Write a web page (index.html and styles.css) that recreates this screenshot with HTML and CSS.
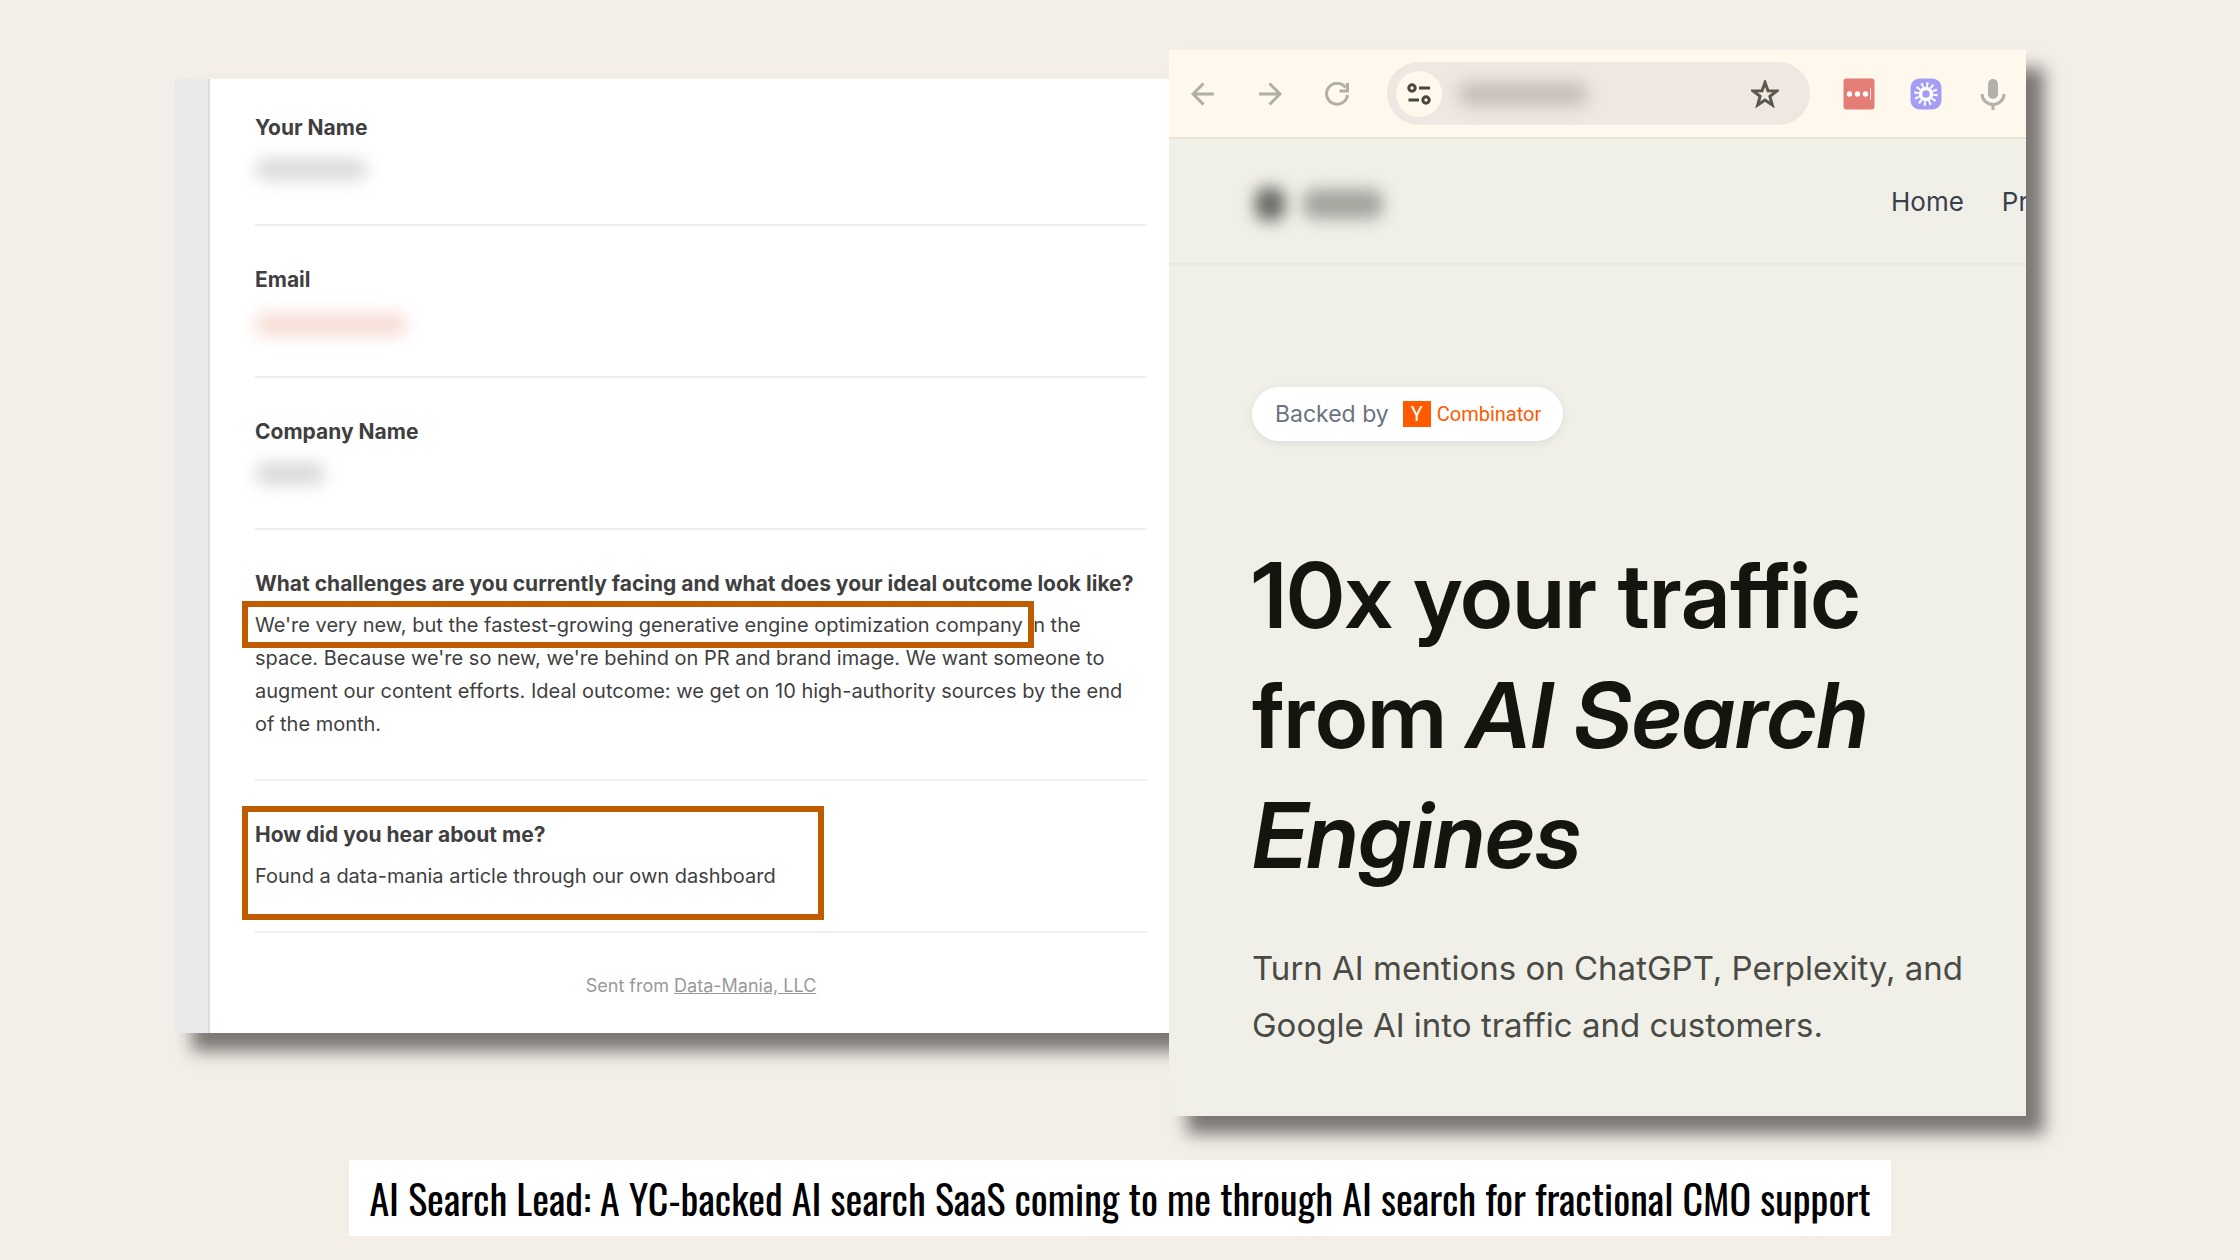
FILE: index.html
```html
<!DOCTYPE html>
<html lang="en">
<head>
<meta charset="utf-8">
<meta name="viewport" content="width=device-width, initial-scale=1">
<title>AI Search Lead</title>
<link rel="stylesheet" href="styles.css">
</head>
<body>
<main class="slide">
  <div class="panels">
    <section class="email">
      <dl class="fields">
        <div class="field">
          <dt>Your Name</dt>
          <dd><span class="redacted redacted-name"></span></dd>
        </div>
        <div class="field">
          <dt>Email</dt>
          <dd><span class="redacted redacted-email"></span></dd>
        </div>
        <div class="field">
          <dt>Company Name</dt>
          <dd><span class="redacted redacted-company"></span></dd>
        </div>
        <div class="field">
          <dt>What challenges are you currently facing and what does your ideal outcome look like?</dt>
          <dd><span class="marked marked-line">We're very new, but the fastest-growing generative engine optimization company</span> in the space. Because we're so new, we're behind on PR and brand image. We want someone to augment our content efforts. Ideal outcome: we get on 10 high-authority sources by the end of the month.</dd>
        </div>
        <div class="field">
          <div class="marked marked-block">
            <dt>How did you hear about me?</dt>
            <dd>Found a data-mania article through our own dashboard</dd>
          </div>
        </div>
      </dl>
      <p class="sent">Sent from <a href="#">Data-Mania, LLC</a></p>
    </section>

    <section class="browser">
      <div class="toolbar">
        <div class="history">
          <button type="button" aria-label="Back"><svg viewBox="0 0 24 24" width="24" height="24"><path d="M23 12H2M12.500 1.500 2 12l10.500 10.500"/></svg></button>
          <button type="button" aria-label="Forward"><svg viewBox="0 0 24 24" width="24" height="24"><path d="M1 12h21M11.500 1.500 22 12 11.500 22.500"/></svg></button>
          <button type="button" aria-label="Reload"><svg viewBox="0 0 24 24" width="24" height="24"><path d="M20.500 5.500A10.500 10.500 0 1 0 22.500 13M22.500 1v8h-8"/></svg></button>
        </div>
        <div class="address">
          <button type="button" class="site-info" aria-label="Site information"><svg viewBox="0 0 24 24" width="24" height="24"><circle cx="5" cy="6" r="3.200"/><path d="M12 6h11M1.500 18H12"/><circle cx="19" cy="18" r="3.200"/></svg></button>
          <span class="redacted redacted-url"></span>
          <button type="button" class="bookmark" aria-label="Bookmark"><svg viewBox="0 0 28 28" width="28" height="28"><path d="M14 2.500l3 8.200 8.800.300-6.900 5.400 2.400 8.600-7.300-4.900L6.700 25l2.400-8.600L2.200 11l8.800-.300z"/></svg></button>
        </div>
        <div class="extensions">
          <button type="button" aria-label="Password manager"><svg viewBox="0 0 32 32" width="32" height="32"><rect x=".5" y=".5" width="31" height="31" rx="3" fill="#e47d76"/><g fill="#fff"><circle cx="6.500" cy="16" r="2.700"/><circle cx="14.500" cy="16" r="2.700"/><circle cx="22.500" cy="16" r="2.700"/><rect x="27" y="10" width="1" height="12" opacity=".8"/></g></svg></button>
          <button type="button" aria-label="Extension"><svg viewBox="0 0 32 32" width="32" height="32"><rect x=".5" y=".5" width="31" height="31" rx="9" fill="#a39df5"/><g stroke="#fff" fill="none"><circle cx="16" cy="16" r="5.500" stroke-width="3.500"/><circle cx="16" cy="16" r="9.500" stroke-width="4.500" stroke-dasharray="2 2.974"/></g></svg></button>
          <button type="button" aria-label="Voice"><svg viewBox="0 0 32 32" width="32" height="32"><rect x="11" y="1" width="10" height="20" rx="5" fill="#b3b0ab"/><path d="M5 16a11 10.500 0 0 0 22 0M16 26.500V32" fill="none" stroke="#b3b0ab" stroke-width="3"/></svg></button>
        </div>
      </div>
      <header class="site-header">
        <div class="brand"><span class="redacted redacted-mark"></span><span class="redacted redacted-brand"></span></div>
        <nav class="site-nav"><a href="#">Home</a><a href="#">Pr</a></nav>
      </header>
      <div class="hero">
        <p class="badge">Backed by <span class="yc"><span class="yc-mark">Y</span>Combinator</span></p>
        <h1>10x your traffic from <em>AI Search Engines</em></h1>
        <p class="lead">Turn AI mentions on ChatGPT, Perplexity, and Google AI into traffic and customers.</p>
      </div>
    </section>
  </div>
  <p class="caption">AI Search Lead: A YC-backed AI search SaaS coming to me through AI search for fractional CMO support</p>
</main>
</body>
</html>
```
FILE: styles.css
```css
* { box-sizing: border-box; }

body {
  margin: 0;
  background: #f4eee8;
  font-family: Inter, "Liberation Sans", sans-serif;
}

h1, p, dl, dd { margin: 0; }
a { color: inherit; }

button {
  display: grid;
  place-items: center;
  padding: 0;
  border: 0;
  background: none;
}

.slide {
  display: flex;
  flex-direction: column;
  align-items: center;
  gap: 44px;
  min-height: 100vh;
}

.panels {
  display: grid;
  grid-template-columns: 995fr 857fr;
  align-items: start;
  align-self: stretch;
  padding: 50px 214px 0 174px;
}

/* Form submission email */
.email {
  margin-top: 29px;
  padding: 0 22px 31px 47px;
  border-left: 34px solid #e8eaec;
  background: #fff;
  box-shadow: inset 2px 0 #dcdddf, 18px 18px 16px rgba(0, 0, 0, .5);
  color: #3f3f3f;
  font-size: 20px;
  line-height: 33px;
}

.field {
  padding: 37px 0 38px;
  border-bottom: 2px solid #efefef;
}

.field:first-child { padding-top: 32px; }
.field dd { display: flow-root; }

.field dt {
  margin-bottom: 9px;
  font-size: 21px;
  font-weight: 700;
}

.marked { position: relative; }

.marked::after {
  content: "";
  position: absolute;
  border: 6px solid #c05c00;
}

.marked-line::after { inset: -12px -11px -11px -13px; }
.marked-block { width: fit-content; }
.marked-block::after { inset: -12px -48px -27px -13px; }

.sent {
  padding-top: 36px;
  color: #999;
  font-size: 18px;
  text-align: center;
}

/* Obscured values */
.redacted {
  display: block;
  border-radius: 12px;
  filter: blur(8px);
}

.redacted-name { width: 112px; height: 23px; margin: 5px 0; background: #dcdcdc; }
.redacted-email { width: 152px; height: 23px; margin: 8px 0 2px; background: #f6ddd5; }
.redacted-company { width: 70px; height: 23px; margin: 5px 0; background: #dadada; }
.redacted-url { width: 130px; height: 24px; background: #c6beb9; }
.redacted-mark { width: 30px; height: 34px; background: #6b6b66; }
.redacted-brand { width: 80px; height: 30px; background: #a4a49e; }

/* Browser window */
.browser {
  position: relative;
  overflow: hidden;
  background: #f0f0e9;
  box-shadow: 18px 18px 16px rgba(0, 0, 0, .5);
}

.toolbar {
  display: flex;
  align-items: center;
  gap: 33px;
  height: 89px;
  padding: 0 17px 0 22px;
  border-bottom: 2px solid #ece3d2;
  background: #fff8ec;
}

.history { display: flex; gap: 43px; padding-right: 5px; }
.history svg { fill: none; stroke: #b1aea5; stroke-width: 3; }

.address {
  display: flex;
  flex: 1;
  align-items: center;
  gap: 16px;
  height: 63px;
  padding: 0 31px 0 9px;
  border-radius: 32px;
  background: #efe7e2;
}

.site-info {
  width: 46px;
  height: 46px;
  border-radius: 50%;
  background: #fff8ec;
}

.site-info svg { fill: none; stroke: #4b463d; stroke-width: 3; }
.bookmark { margin-left: auto; }
.bookmark svg { fill: none; stroke: #5a574b; stroke-width: 3; }
.extensions { display: flex; gap: 35px; }

.site-header {
  display: flex;
  align-items: center;
  justify-content: space-between;
  height: 127px;
  padding-left: 86px;
  border-bottom: 3px solid #e9e9e2;
}

.brand { display: flex; align-items: center; gap: 18px; padding-top: 6px; }

.site-nav {
  display: flex;
  gap: 38px;
  width: 135px;
  color: #3b3f4b;
  font-size: 26px;
}

.site-nav a { text-decoration: none; }

.hero {
  padding: 121px 40px 62px 83px;
  color: #151510;
}

.badge {
  display: flex;
  align-items: center;
  gap: 14px;
  width: fit-content;
  height: 54px;
  padding: 0 22px 0 23px;
  border-radius: 27px;
  background: #fff;
  box-shadow: 0 2px 8px rgba(60, 60, 90, .1);
  color: #6b7280;
  font-size: 23px;
}

.yc {
  display: flex;
  align-items: center;
  gap: 6px;
  color: #ff5a00;
  font-family: Roboto, sans-serif;
  font-size: 20px;
}

.yc-mark {
  width: 28px;
  background: #ff5a00;
  color: #fff;
  line-height: 26px;
  text-align: center;
}

.hero h1 {
  margin-top: 94px;
  font-family: "Inter Display", Inter, "Liberation Sans", sans-serif;
  font-size: 91px;
  font-weight: 600;
  line-height: 120px;
}

.lead {
  margin-top: 45px;
  color: #4a4a45;
  font-size: 33px;
  line-height: 57px;
}

.caption {
  padding: 0 20px;
  background: #fff;
  color: #000;
  font-family: Oswald, "Open Sans Condensed", "Roboto Condensed", "Liberation Sans Narrow", sans-serif;
  font-size: 40px;
  line-height: 76px;
}
```
